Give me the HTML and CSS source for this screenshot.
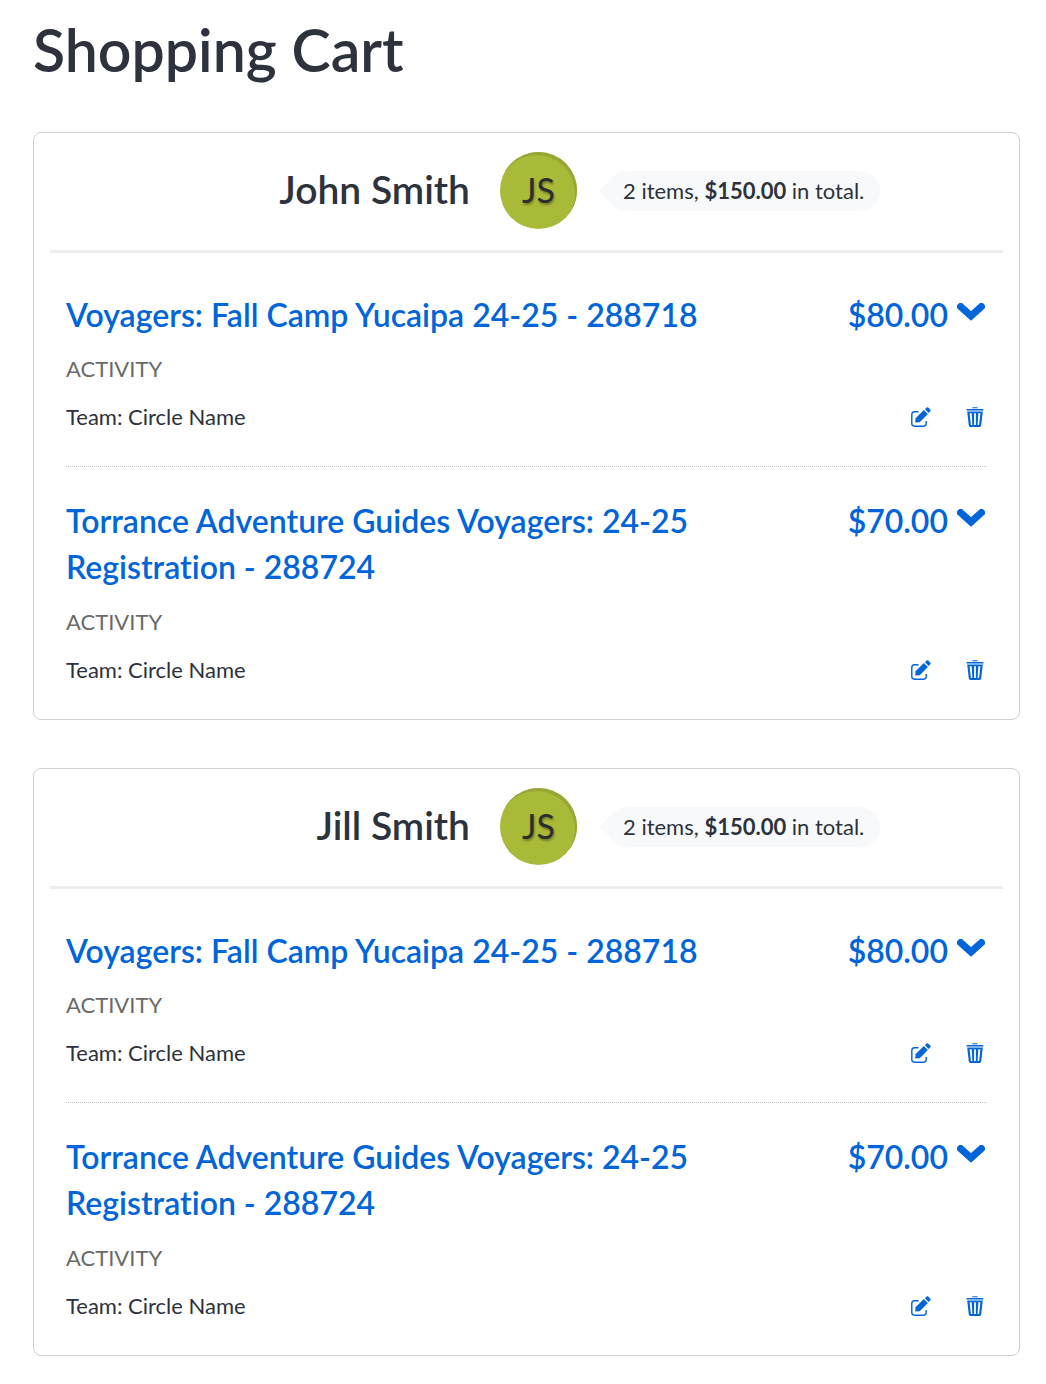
FILE: index.html
```html
<!DOCTYPE html>
<html lang="en">
<head>
  <meta charset="UTF-8" />
  <title>Shopping Cart</title>
  <link rel="stylesheet" href="styles.css">
</head>
<body>
  <!-- shared icons -->
  <svg class="sprite" aria-hidden="true">
    <symbol id="chevron" viewBox="0 0 28 18">
      <path d="M3.6 3.6 L14 13 L24.4 3.6" fill="none" stroke="currentColor" stroke-width="7.2" stroke-linecap="round" stroke-linejoin="miter" />
    </symbol>
    <symbol id="edit" viewBox="0 0 20 20">
      <path d="M7.5 4.8H3.4Q.8 4.8 .8 7.4V16.6Q.8 19.2 3.4 19.2H12.6Q15.2 19.2 15.2 16.6V14" fill="none" stroke="currentColor" stroke-width="1.4" />
      <path d="M4.2 15.6L4.6 11.2L12.8 3L16.9 7.1L8.7 15.3Z" fill="currentColor" />
      <path d="M14 2.2L15.6.6Q16.4-.1 17.2.6L19.3 2.7Q20 3.5 19.3 4.3L17.7 5.9Z" fill="currentColor" />
    </symbol>
    <symbol id="trash" viewBox="0 0 18 20">
      <path d="M6.4 .2H11.6V1.2H6.4ZM1 2H17Q17.6 2 17.6 3.6H.4Q.4 2 1 2Z" fill="currentColor" />
      <path fill-rule="evenodd" d="M1.2 4.6H16.8L15.2 18.6Q15 20 13.6 20H4.4Q3 20 2.8 18.6ZM3.6 6.2L4.9 18H6.4L5.7 6.2ZM8.1 6.2V18H9.9V6.2ZM12.3 6.2L11.6 18H13.1L14.4 6.2Z" fill="currentColor" />
    </symbol>
  </svg>

  <main class="cart">
    <h1>Shopping Cart</h1>

    <section class="card">
      <header class="person">
        <h2>John Smith</h2>
        <div class="avatar">JS</div>
        <p class="summary">2 items, <strong>$150.00</strong> in total.</p>
      </header>
      <div class="items">
        <article class="item">
          <div class="row">
            <h3><a href="#">Voyagers: Fall Camp Yucaipa 24-25 - 288718</a></h3>
            <button class="price" type="button">$80.00 <svg class="chevron"><use href="#chevron" /></svg></button>
          </div>
          <p class="type">ACTIVITY</p>
          <div class="row details">
            <p>Team: Circle Name</p>
            <div class="actions">
              <button type="button" aria-label="Edit"><svg class="edit"><use href="#edit" /></svg></button>
              <button type="button" aria-label="Remove"><svg class="trash"><use href="#trash" /></svg></button>
            </div>
          </div>
        </article>
        <article class="item">
          <div class="row">
            <h3><a href="#">Torrance Adventure Guides Voyagers: 24-25 Registration - 288724</a></h3>
            <button class="price" type="button">$70.00 <svg class="chevron"><use href="#chevron" /></svg></button>
          </div>
          <p class="type">ACTIVITY</p>
          <div class="row details">
            <p>Team: Circle Name</p>
            <div class="actions">
              <button type="button" aria-label="Edit"><svg class="edit"><use href="#edit" /></svg></button>
              <button type="button" aria-label="Remove"><svg class="trash"><use href="#trash" /></svg></button>
            </div>
          </div>
        </article>
      </div>
    </section>

    <section class="card">
      <header class="person">
        <h2>Jill Smith</h2>
        <div class="avatar">JS</div>
        <p class="summary">2 items, <strong>$150.00</strong> in total.</p>
      </header>
      <div class="items">
        <article class="item">
          <div class="row">
            <h3><a href="#">Voyagers: Fall Camp Yucaipa 24-25 - 288718</a></h3>
            <button class="price" type="button">$80.00 <svg class="chevron"><use href="#chevron" /></svg></button>
          </div>
          <p class="type">ACTIVITY</p>
          <div class="row details">
            <p>Team: Circle Name</p>
            <div class="actions">
              <button type="button" aria-label="Edit"><svg class="edit"><use href="#edit" /></svg></button>
              <button type="button" aria-label="Remove"><svg class="trash"><use href="#trash" /></svg></button>
            </div>
          </div>
        </article>
        <article class="item">
          <div class="row">
            <h3><a href="#">Torrance Adventure Guides Voyagers: 24-25 Registration - 288724</a></h3>
            <button class="price" type="button">$70.00 <svg class="chevron"><use href="#chevron" /></svg></button>
          </div>
          <p class="type">ACTIVITY</p>
          <div class="row details">
            <p>Team: Circle Name</p>
            <div class="actions">
              <button type="button" aria-label="Edit"><svg class="edit"><use href="#edit" /></svg></button>
              <button type="button" aria-label="Remove"><svg class="trash"><use href="#trash" /></svg></button>
            </div>
          </div>
        </article>
      </div>
    </section>
  </main>
</body>
</html>
```
FILE: styles.css
```css
* {
  box-sizing: border-box;
}
body {
  margin: 0;
  background: #fff;
  color: #2d323c;
  font-family: Lato, sans-serif;
  font-size: 22px;
  font-variant-ligatures: none;
  line-height: 32px;
}
h1, h2, h3, p {
  margin: 0;
  font-weight: 600;
}
p {
  font-weight: 400;
}
a {
  color: #0065d8;
  text-decoration: none;
}
button {
  padding: 0;
  border: 0;
  background: none;
  color: #0065d8;
  font: inherit;
  cursor: pointer;
}
svg {
  display: block;
}
.sprite {
  position: absolute;
  width: 0;
  height: 0;
}
.cart {
  padding: 18px 26px 28px 33px;
}
h1 {
  margin-bottom: 50px;
  font-size: 59px;
  line-height: 64px;
}
.card {
  border: 1px solid #cfd0d2;
  border-radius: 8px;
}
.card + .card {
  margin-top: 48px;
}
.person {
  display: grid;
  grid-template-columns: 1fr 77px 1fr;
  column-gap: 30px;
  align-items: center;
  margin: 0 16px;
  padding: 19px 0 21px 24px;
  border-bottom: 3px solid #ededed;
}
h2 {
  padding-bottom: 4px;
  font-size: 39px;
  line-height: 44px;
  text-align: right;
}
.avatar {
  height: 77px;
  border-radius: 50%;
  background: #a9b938;
  box-shadow: inset -2px 3px 0 #98a636;
  color: #2b2d2e;
  font-size: 34px;
  line-height: 75px;
  text-align: center;
  text-shadow: 1px 2px 2px rgba(0, 0, 0, 0.3);
}
.summary {
  position: relative;
  justify-self: start;
  padding: 4px 16px;
  border-radius: 20px;
  background: #f8f9fb;
}
.summary::before {
  content: "";
  position: absolute;
  top: 10px;
  left: -8px;
  border: 10px solid transparent;
  border-left: 0;
  border-right-color: #f8f9fb;
}
strong {
  font-weight: 700;
}
.items {
  padding: 7px 32px 0;
}
.item {
  padding: 32px 0 33px;
}
.item + .item {
  padding-top: 31px;
  border-top: 1px dotted #c4c6c8;
}
.row {
  display: flex;
  justify-content: space-between;
  align-items: flex-start;
}
h3 {
  flex: 0 1 75%;
  font-size: 32px;
  line-height: 46px;
}
.price {
  display: flex;
  gap: 9px;
  padding-right: 2px;
  font-size: 32px;
  font-weight: 600;
  line-height: 46px;
}
.chevron {
  width: 28px;
  height: 18px;
  margin-top: 11px;
}
.type {
  margin: 15px 0 16px;
  color: #6a6a6a;
}
.item + .item .type {
  margin-top: 16px;
}
.details {
  align-items: center;
}
.actions {
  display: flex;
  gap: 35px;
  padding-right: 3px;
}
.edit {
  width: 20px;
  height: 20px;
}
.trash {
  width: 18px;
  height: 20px;
}
```
